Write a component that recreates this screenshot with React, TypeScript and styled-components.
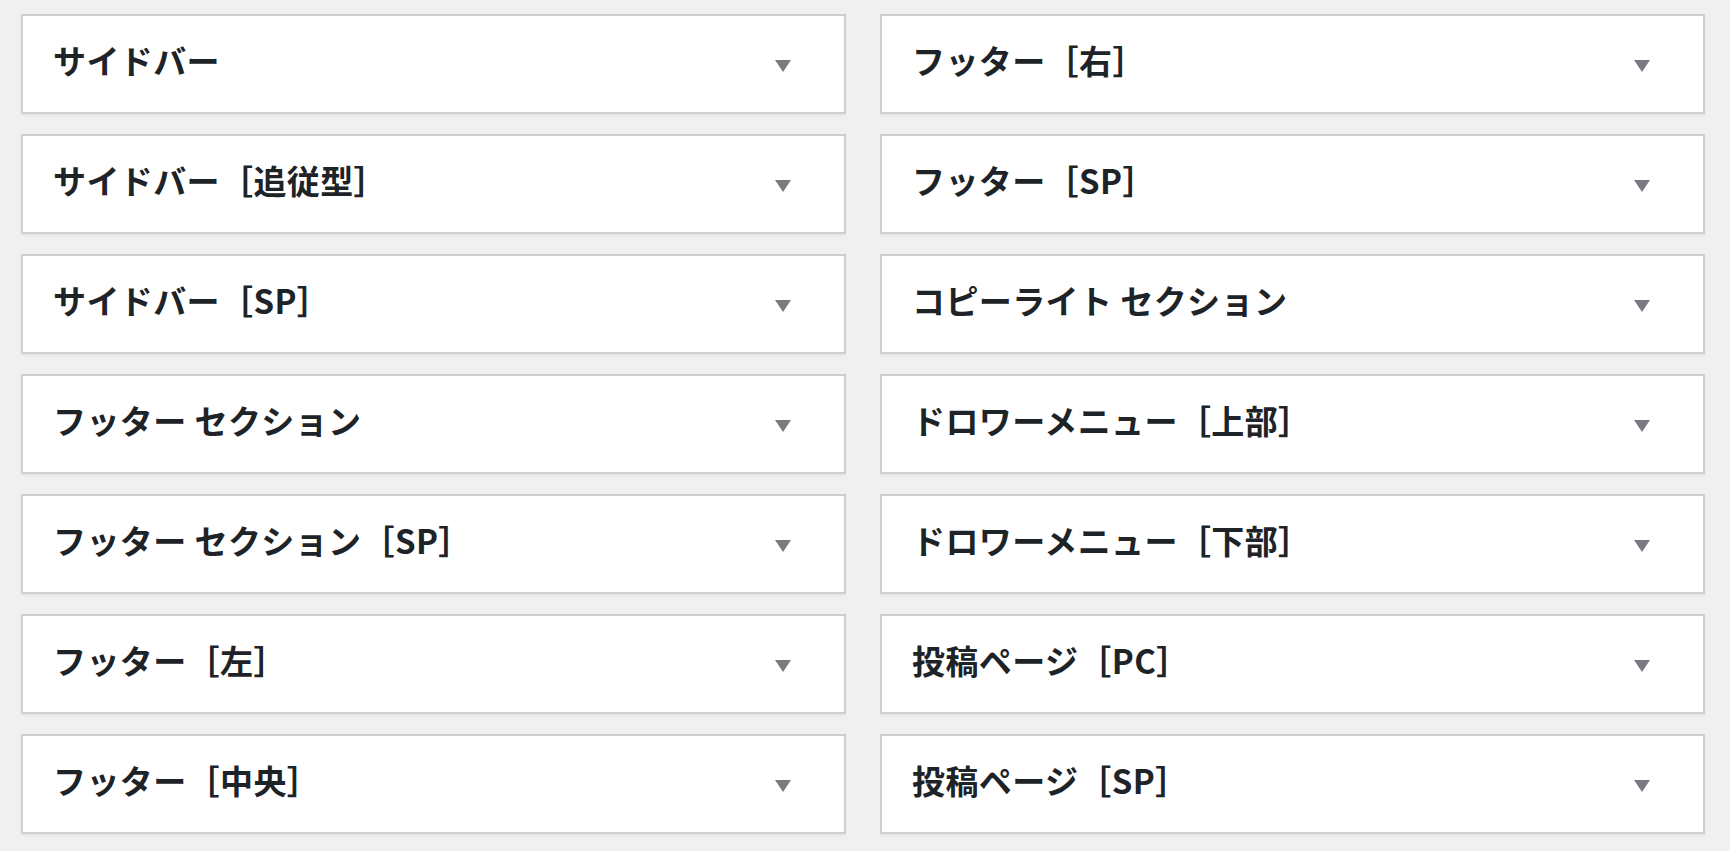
import React from 'react';
import styled, { createGlobalStyle } from 'styled-components';

const GlobalStyle = createGlobalStyle`
  html, body {
    margin: 0;
    padding: 0;
    background: #f0f0f1;
  }
  body {
    font-family: 'Noto Sans CJK JP', 'Noto Sans', sans-serif;
  }
`;

const Page = styled.div`
  display: grid;
  grid-template-columns: 1fr 1fr;
  column-gap: 34px;
  padding: 14px 25px 0 21px;
  min-height: 851px;
  box-sizing: border-box;
`;

const Column = styled.div`
  display: flex;
  flex-direction: column;
  gap: 20px;
`;

const Widget = styled.div`
  display: flex;
  align-items: center;
  justify-content: space-between;
  height: 100px;
  box-sizing: border-box;
  background: #fff;
  border: 2px solid #ccd0d4;
  box-shadow: 0 2px 2px rgba(0, 0, 0, 0.04);
  padding: 0 53px 0 30px;
`;

const Title = styled.h3`
  margin: 0 0 7px;
  font-family: 'Noto Sans CJK JP', 'Noto Sans', sans-serif;
  font-size: 33px;
  font-weight: 700;
  letter-spacing: 0.4px;
  color: #1d2327;
  line-height: 1;
  white-space: pre;
`;

const Toggle = styled.span`
  width: 0;
  height: 0;
  margin-top: 3px;
  border-left: 8px solid transparent;
  border-right: 8px solid transparent;
  border-top: 12px solid #787c82;
`;

const leftItems = [
  'サイドバー',
  'サイドバー［追従型］',
  'サイドバー［SP］',
  'フッター セクション',
  'フッター セクション［SP］',
  'フッター［左］',
  'フッター［中央］',
];

const rightItems = [
  'フッター［右］',
  'フッター［SP］',
  'コピーライト セクション',
  'ドロワーメニュー［上部］',
  'ドロワーメニュー［下部］',
  '投稿ページ［PC］',
  '投稿ページ［SP］',
];

const WidgetArea: React.FC<{ title: string }> = ({ title }) => (
  <Widget>
    <Title>{title}</Title>
    <Toggle />
  </Widget>
);

const App: React.FC = () => (
  <>
    <GlobalStyle />
    <Page>
      <Column>
        {leftItems.map((t) => (
          <WidgetArea key={t} title={t} />
        ))}
      </Column>
      <Column>
        {rightItems.map((t) => (
          <WidgetArea key={t} title={t} />
        ))}
      </Column>
    </Page>
  </>
);

export default App;
